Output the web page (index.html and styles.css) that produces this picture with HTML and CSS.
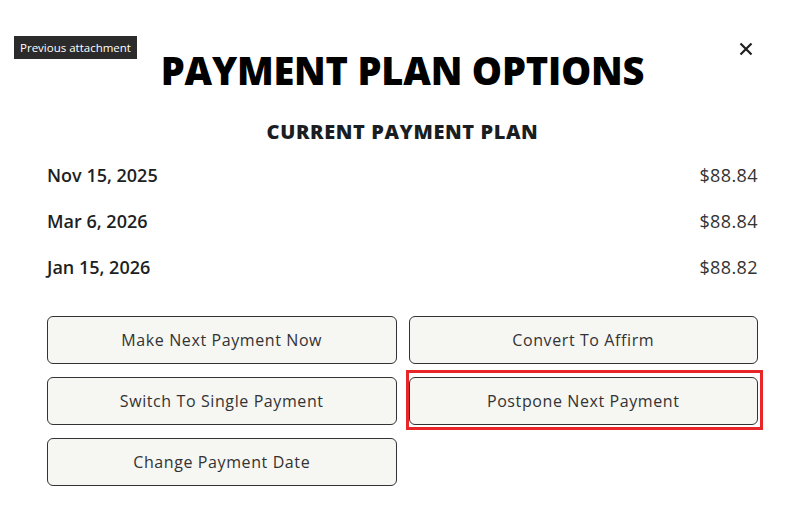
FILE: index.html
```html
<!DOCTYPE html>
<html lang="en">
<head>
    <meta charset="UTF-8">
    <meta name="viewport" content="width=device-width, initial-scale=1.0">
    <title>Payment Plan Options</title>
    <link rel="stylesheet" href="styles.css">
</head>
<body>

<div class="modal">
    <button class="close-button" type="button" aria-label="Close">
        <svg width="14" height="14" viewBox="0 0 14 14">
            <path d="M1.5 1.5 L12.5 12.5 M12.5 1.5 L1.5 12.5" stroke="#1f1f1f" stroke-width="2.2" fill="none"/>
        </svg>
    </button>

    <h1 class="title">PAYMENT PLAN OPTIONS</h1>
    <h2 class="subtitle">CURRENT PAYMENT PLAN</h2>

    <!-- Upcoming installments -->
    <ul class="schedule">
        <li><span class="date">Nov 15, 2025</span><span class="amount">$88.84</span></li>
        <li><span class="date">Mar 6, 2026</span><span class="amount">$88.84</span></li>
        <li><span class="date">Jan 15, 2026</span><span class="amount">$88.82</span></li>
    </ul>

    <div class="actions">
        <button class="action-button" type="button">Make Next Payment Now</button>
        <button class="action-button" type="button">Convert To Affirm</button>
        <button class="action-button" type="button">Switch To Single Payment</button>
        <button class="action-button highlighted" type="button">Postpone Next Payment</button>
        <button class="action-button" type="button">Change Payment Date</button>
    </div>
</div>

<div class="tooltip">Previous attachment</div>

</body>
</html>
```
FILE: styles.css
```css
body {
    margin: 0;
    background-color: #ffffff;
    font-family: 'Open Sans', 'Liberation Sans', sans-serif;
    color: #1d1f23;
}

.modal {
    position: relative;
    padding: 46px 47px 30px;
}

.close-button {
    position: absolute;
    top: 39px;
    right: 49px;
    width: 20px;
    height: 20px;
    padding: 0;
    border: none;
    background: none;
    display: flex;
    align-items: center;
    justify-content: center;
    cursor: pointer;
}

.title {
    margin: 0;
    text-align: center;
    font-size: 38px;
    line-height: 48px;
    font-weight: 800;
    letter-spacing: -0.2px;
    color: #000000;
}

.subtitle {
    margin: 26px 0 0;
    text-align: center;
    font-size: 20px;
    line-height: 24px;
    font-weight: 800;
    letter-spacing: 0.6px;
    color: #1a1d21;
}

.schedule {
    list-style: none;
    margin: 8px 0 0;
    padding: 0;
}

.schedule li {
    display: flex;
    justify-content: space-between;
    align-items: center;
    height: 46px;
}

.date {
    font-size: 18px;
    font-weight: 600;
}

.amount {
    font-size: 18px;
    letter-spacing: 0.4px;
    color: #333333;
}

.actions {
    display: grid;
    grid-template-columns: 1fr 1fr;
    column-gap: 12px;
    row-gap: 13px;
    margin-top: 26px;
}

.action-button {
    position: relative;
    height: 48px;
    border: 1px solid #333333;
    border-radius: 6px;
    background-color: #f6f6f2;
    font-family: inherit;
    font-size: 16px;
    letter-spacing: 0.6px;
    color: #333333;
    cursor: pointer;
}

.highlighted::after {
    content: '';
    position: absolute;
    top: -8px;
    left: -4px;
    right: -6px;
    bottom: -6px;
    border: 3px solid #e8262a;
}

.tooltip {
    position: absolute;
    top: 36px;
    left: 14px;
    width: 123px;
    height: 23px;
    background-color: #2b2b2b;
    color: #ffffff;
    font-family: 'Open Sans', sans-serif;
    font-size: 11.5px;
    line-height: 23px;
    text-align: center;
}
```
